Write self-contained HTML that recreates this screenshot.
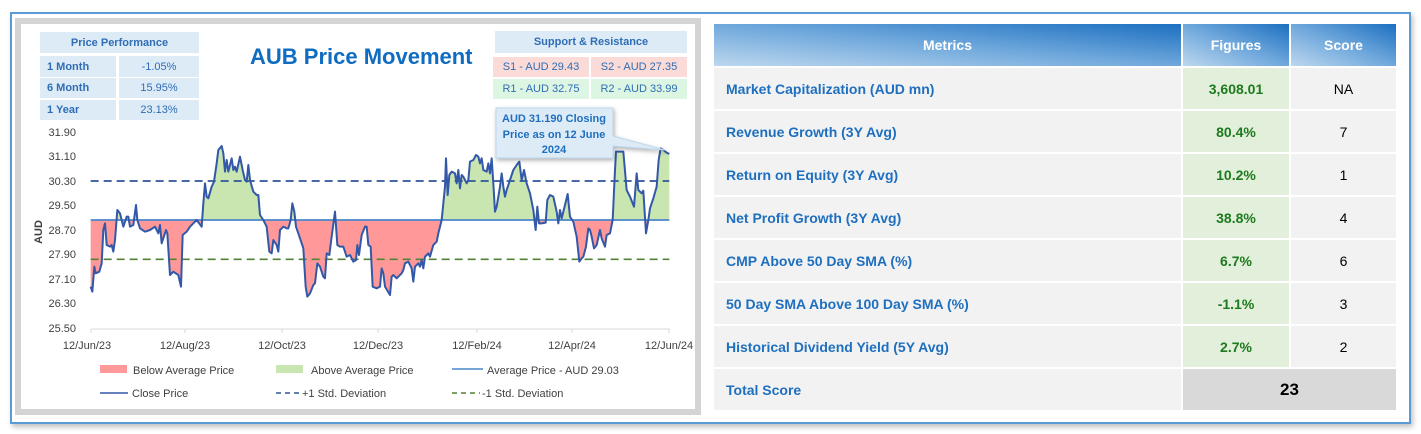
<!DOCTYPE html>
<html><head><meta charset="utf-8"><style>
*{margin:0;padding:0;box-sizing:border-box}
body{width:1421px;height:434px;background:#fff;font-family:"Liberation Sans",sans-serif;position:relative;overflow:hidden}
.frame{position:absolute;left:10px;top:12px;width:1401px;height:412px;border:2px solid #5B9BD5;box-shadow:2px 3px 5px rgba(0,0,0,.25)}
.panel{position:absolute;left:15px;top:18px;width:686px;height:397px;border:6px solid #D4D4D4;background:#fff}
.c{position:absolute;font-size:11px;color:#2F6DB5;display:flex;align-items:center;justify-content:center}
.lb{background:#DDEBF7}
table{position:absolute;left:712px;top:22px;border-collapse:collapse}
td{border:2px solid #fff;height:43px;font-size:14px;font-weight:bold}
.h{color:#fff;text-align:center;background:linear-gradient(to top right,#BDD7EE 0%,#6FA8DC 50%,#1C6FC0 100%)}
.m{background:#F2F2F2;color:#1F6FBF;padding-left:12px;width:469px}
.f{background:#E2EFDA;color:#1E7A1E;text-align:center;width:108px}
.s{background:#F2F2F2;color:#000;text-align:center;font-weight:normal;width:107px}
</style></head><body>
<div class="frame"></div>
<div class="panel"></div>
<div class="c lb" style="left:40px;top:32px;width:159px;height:21px;font-weight:bold">Price Performance</div>
<div class="c lb" style="left:40px;top:56px;width:76px;height:21px;font-weight:bold;justify-content:flex-start;padding-left:7px">1 Month</div>
<div class="c lb" style="left:119px;top:56px;width:80px;height:21px">-1.05%</div>
<div class="c lb" style="left:40px;top:78px;width:76px;height:20px;font-weight:bold;justify-content:flex-start;padding-left:7px">6 Month</div>
<div class="c lb" style="left:119px;top:78px;width:80px;height:20px">15.95%</div>
<div class="c lb" style="left:40px;top:100px;width:76px;height:20px;font-weight:bold;justify-content:flex-start;padding-left:7px">1 Year</div>
<div class="c lb" style="left:119px;top:100px;width:80px;height:20px">23.13%</div>
<div style="position:absolute;left:250px;top:44px;font-size:22px;font-weight:bold;color:#0F6CC0">AUB Price Movement</div>
<div class="c lb" style="left:495px;top:31px;width:192px;height:22px;font-weight:bold">Support &amp; Resistance</div>
<div class="c" style="left:493px;top:57px;width:96px;height:20px;background:#FADBD8">S1 - AUD 29.43</div>
<div class="c" style="left:591px;top:57px;width:96px;height:20px;background:#FADBD8">S2 - AUD 27.35</div>
<div class="c" style="left:493px;top:79px;width:96px;height:20px;background:#DDF5E3">R1 - AUD 32.75</div>
<div class="c" style="left:591px;top:79px;width:96px;height:20px;background:#DDF5E3">R2 - AUD 33.99</div>
<svg style="position:absolute;left:0;top:0" width="710" height="420">
<g font-size="11" fill="#404040" text-anchor="end" font-family="Liberation Sans,sans-serif">
<text x="76" y="136">31.90</text><text x="76" y="160">31.10</text><text x="76" y="185">30.30</text><text x="76" y="209">29.50</text><text x="76" y="234">28.70</text><text x="76" y="258">27.90</text><text x="76" y="283">27.10</text><text x="76" y="307">26.30</text><text x="76" y="332">25.50</text>
</g>
<text x="42" y="232" font-size="11" font-weight="bold" fill="#404040" transform="rotate(-90 42 232)" text-anchor="middle">AUD</text>
<defs><clipPath id="up"><rect x="0" y="0" width="3000" height="300"/></clipPath><clipPath id="dn"><rect x="0" y="300" width="3000" height="600"/></clipPath>
<polygon id="pg" points="92,300 92,500 97,515 103,440 107,460 118,455 125,430 130,330 135,310 140,375 150,380 155,375 160,395 165,360 172,270 180,280 190,320 200,290 205,290 210,320 220,315 228,255 232,300 240,325 255,335 270,330 285,320 295,340 300,315 305,370 318,330 322,340 330,465 340,455 355,465 363,500 368,345 380,335 390,320 400,310 410,300 425,320 430,250 435,190 440,230 445,235 455,200 462,185 470,130 475,90 485,78 490,100 495,155 500,120 505,155 515,115 520,150 525,140 530,155 540,110 548,150 555,180 560,185 565,135 570,180 580,215 590,225 595,225 600,285 610,300 620,320 628,395 635,400 640,360 650,375 655,395 660,330 670,320 680,325 685,325 692,300 697,250 703,275 708,320 720,355 730,385 737,500 742,530 750,520 760,495 765,490 772,430 780,440 790,470 795,475 800,400 808,405 815,350 825,275 832,375 840,380 850,380 860,410 870,405 880,425 888,420 892,375 897,405 905,345 915,320 920,320 925,375 932,380 938,500 950,505 960,500 965,445 970,460 975,500 990,525 995,470 1000,465 1010,475 1025,460 1030,450 1035,430 1045,425 1055,445 1060,485 1065,440 1075,430 1080,440 1085,420 1090,445 1095,410 1105,400 1110,410 1120,375 1130,365 1135,340 1145,300 1155,200 1158,115 1163,225 1168,165 1175,155 1185,160 1190,190 1195,150 1200,205 1205,165 1210,170 1220,190 1225,180 1230,125 1240,120 1248,105 1255,110 1260,130 1265,115 1270,150 1280,155 1285,130 1290,160 1295,115 1300,190 1305,275 1310,260 1320,200 1325,160 1330,200 1335,230 1340,210 1350,180 1360,150 1370,135 1378,125 1385,180 1392,150 1400,190 1410,220 1420,270 1427,330 1432,260 1437,310 1445,310 1457,308 1462,240 1470,225 1480,230 1490,275 1495,310 1500,270 1505,295 1515,255 1523,222 1530,290 1540,305 1550,350 1558,425 1565,415 1570,410 1578,380 1585,325 1590,330 1595,350 1602,385 1610,375 1620,330 1625,355 1635,380 1640,345 1650,340 1658,300 1665,150 1668,95 1690,95 1700,210 1710,230 1722,260 1730,160 1735,210 1745,220 1750,212 1758,340 1765,300 1770,265 1780,235 1790,200 1796,120 1802,85 1810,90 1820,98 1828,102 1828,300"/>
</defs>
<g transform="translate(60,120) scale(0.33333)">
<use href="#pg" clip-path="url(#up)" fill="#C9E5B0"/>
<use href="#pg" clip-path="url(#dn)" fill="#FF9999"/>
<line x1="92" y1="300" x2="1828" y2="300" stroke="#4A86C8" stroke-width="5"/>
<line x1="92" y1="183" x2="1828" y2="183" stroke="#2F5597" stroke-width="5" stroke-dasharray="24,15"/>
<line x1="92" y1="418" x2="1828" y2="418" stroke="#548235" stroke-width="5" stroke-dasharray="24,15"/>
<polyline fill="none" stroke="#3358A8" stroke-width="6" stroke-linejoin="round" points="92,500 97,515 103,440 107,460 118,455 125,430 130,330 135,310 140,375 150,380 155,375 160,395 165,360 172,270 180,280 190,320 200,290 205,290 210,320 220,315 228,255 232,300 240,325 255,335 270,330 285,320 295,340 300,315 305,370 318,330 322,340 330,465 340,455 355,465 363,500 368,345 380,335 390,320 400,310 410,300 425,320 430,250 435,190 440,230 445,235 455,200 462,185 470,130 475,90 485,78 490,100 495,155 500,120 505,155 515,115 520,150 525,140 530,155 540,110 548,150 555,180 560,185 565,135 570,180 580,215 590,225 595,225 600,285 610,300 620,320 628,395 635,400 640,360 650,375 655,395 660,330 670,320 680,325 685,325 692,300 697,250 703,275 708,320 720,355 730,385 737,500 742,530 750,520 760,495 765,490 772,430 780,440 790,470 795,475 800,400 808,405 815,350 825,275 832,375 840,380 850,380 860,410 870,405 880,425 888,420 892,375 897,405 905,345 915,320 920,320 925,375 932,380 938,500 950,505 960,500 965,445 970,460 975,500 990,525 995,470 1000,465 1010,475 1025,460 1030,450 1035,430 1045,425 1055,445 1060,485 1065,440 1075,430 1080,440 1085,420 1090,445 1095,410 1105,400 1110,410 1120,375 1130,365 1135,340 1145,300 1155,200 1158,115 1163,225 1168,165 1175,155 1185,160 1190,190 1195,150 1200,205 1205,165 1210,170 1220,190 1225,180 1230,125 1240,120 1248,105 1255,110 1260,130 1265,115 1270,150 1280,155 1285,130 1290,160 1295,115 1300,190 1305,275 1310,260 1320,200 1325,160 1330,200 1335,230 1340,210 1350,180 1360,150 1370,135 1378,125 1385,180 1392,150 1400,190 1410,220 1420,270 1427,330 1432,260 1437,310 1445,310 1457,308 1462,240 1470,225 1480,230 1490,275 1495,310 1500,270 1505,295 1515,255 1523,222 1530,290 1540,305 1550,350 1558,425 1565,415 1570,410 1578,380 1585,325 1590,330 1595,350 1602,385 1610,375 1620,330 1625,355 1635,380 1640,345 1650,340 1658,300 1665,150 1668,95 1690,95 1700,210 1710,230 1722,260 1730,160 1735,210 1745,220 1750,212 1758,340 1765,300 1770,265 1780,235 1790,200 1796,120 1802,85 1810,90 1820,98 1828,102"/>
</g>
<line x1="91" y1="329" x2="670" y2="329" stroke="#D9D9D9"/>
<g stroke="#D9D9D9"><line x1="91" y1="329" x2="91" y2="333"/><line x1="185" y1="329" x2="185" y2="333"/><line x1="282" y1="329" x2="282" y2="333"/><line x1="378" y1="329" x2="378" y2="333"/><line x1="477" y1="329" x2="477" y2="333"/><line x1="572" y1="329" x2="572" y2="333"/><line x1="669" y1="329" x2="669" y2="333"/></g>
<g font-size="11" fill="#404040" text-anchor="middle"><text x="87" y="349">12/Jun/23</text><text x="185" y="349">12/Aug/23</text><text x="282" y="349">12/Oct/23</text><text x="378" y="349">12/Dec/23</text><text x="477" y="349">12/Feb/24</text><text x="572" y="349">12/Apr/24</text><text x="669" y="349">12/Jun/24</text></g>
<polygon points="496,108 613,108 613,136 665,150 613,146 613,158 496,158" fill="#DDEBF7" stroke="#BDD7EE" style="filter:drop-shadow(1px 2px 2px rgba(0,0,0,.3))"/>
<g font-size="11" font-weight="bold" fill="#1F6FBF" text-anchor="middle"><text x="554" y="122">AUD 31.190 Closing</text><text x="554" y="138">Price as on 12 June</text><text x="554" y="153">2024</text></g>
<g font-size="11" fill="#404040">
<rect x="100" y="365" width="27" height="8" fill="#FF9999"/><text x="133" y="374">Below Average Price</text>
<rect x="276" y="365" width="27" height="8" fill="#C9E5B0"/><text x="311" y="374">Above Average Price</text>
<line x1="452" y1="369" x2="483" y2="369" stroke="#4A86C8" stroke-width="1.5"/><text x="487" y="374">Average Price - AUD 29.03</text>
<line x1="100" y1="393" x2="128" y2="393" stroke="#3358A8" stroke-width="1.5"/><text x="132" y="397">Close Price</text>
<line x1="276" y1="393" x2="300" y2="393" stroke="#2F5597" stroke-width="1.5" stroke-dasharray="5,4"/><text x="302" y="397">+1 Std. Deviation</text>
<line x1="452" y1="393" x2="480" y2="393" stroke="#548235" stroke-width="1.5" stroke-dasharray="5,4"/><text x="482" y="397">-1 Std. Deviation</text>
</g>
</svg>
<table>
<tr><td class="h" style="height:44px">Metrics</td><td class="h">Figures</td><td class="h">Score</td></tr>
<tr><td class="m">Market Capitalization (AUD mn)</td><td class="f">3,608.01</td><td class="s">NA</td></tr>
<tr><td class="m">Revenue Growth (3Y Avg)</td><td class="f">80.4%</td><td class="s">7</td></tr>
<tr><td class="m">Return on Equity (3Y Avg)</td><td class="f">10.2%</td><td class="s">1</td></tr>
<tr><td class="m">Net Profit Growth (3Y Avg)</td><td class="f">38.8%</td><td class="s">4</td></tr>
<tr><td class="m">CMP Above 50 Day SMA (%)</td><td class="f">6.7%</td><td class="s">6</td></tr>
<tr><td class="m">50 Day SMA Above 100 Day SMA (%)</td><td class="f">-1.1%</td><td class="s">3</td></tr>
<tr><td class="m">Historical Dividend Yield (5Y Avg)</td><td class="f">2.7%</td><td class="s">2</td></tr>
<tr><td class="m">Total Score</td><td colspan="2" style="background:#D9D9D9;text-align:center;font-size:17px;color:#000">23</td></tr>
</table>
</body></html>
